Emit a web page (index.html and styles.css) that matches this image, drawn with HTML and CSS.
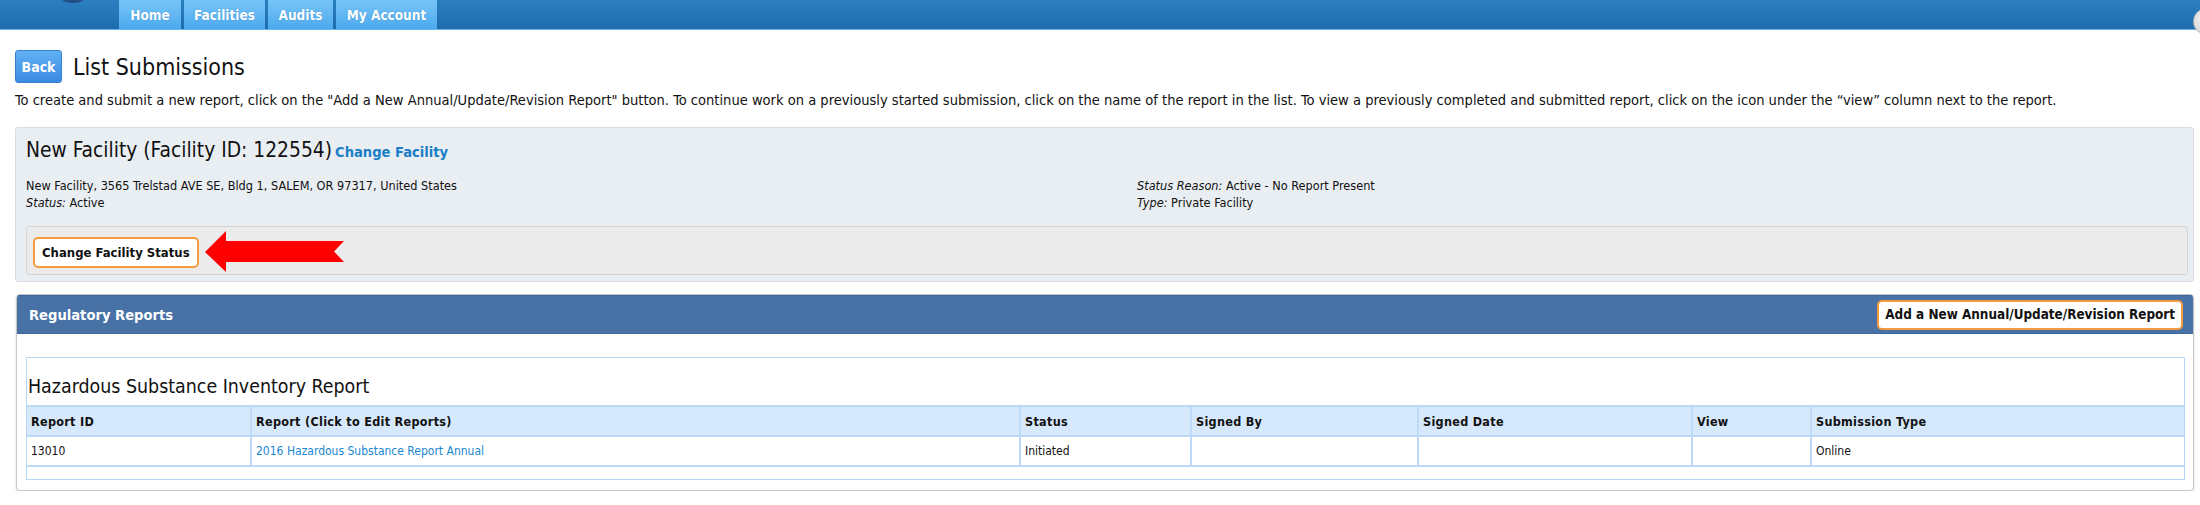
FILE: index.html
```html
<!DOCTYPE html>
<html lang="en">
<head>
  <meta charset="UTF-8">
  <title>List Submissions</title>
  <link rel="stylesheet" href="styles.css">
</head>
<body>
  <header class="topbar">
    <span class="logo"></span>
    <nav class="tabs">
      <a class="tab tab-home" href="#">Home</a>
      <a class="tab tab-facilities" href="#">Facilities</a>
      <a class="tab tab-audits" href="#">Audits</a>
      <a class="tab tab-account" href="#">My Account</a>
    </nav>
    <span class="user-badge"></span>
  </header>

  <main class="page">
    <div class="title-row">
      <button class="back-btn">Back</button>
      <h1>List Submissions</h1>
    </div>
    <p class="intro">To create and submit a new report, click on the "Add a New Annual/Update/Revision Report" button. To continue work on a previously started submission, click on the name of the report in the list. To view a previously completed and submitted report, click on the icon under the “view” column next to the report.</p>

    <section class="facility">
      <h2>New Facility (Facility ID: 122554)<a href="#" class="change-link">Change Facility</a></h2>
      <div class="facility-info">
        <div>
          <div>New Facility, 3565 Trelstad AVE SE, Bldg 1, SALEM, OR 97317, United States</div>
          <div><em>Status:</em> Active</div>
        </div>
        <div>
          <div><em>Status Reason:</em> Active - No Report Present</div>
          <div><em>Type:</em> Private Facility</div>
        </div>
      </div>
      <div class="action-bar">
        <button class="orange-btn">Change Facility Status</button>
        <svg class="arrow" width="140" height="42" viewBox="0 0 140 42">
          <polygon points="0,21 21,0 21,10 139,10 129,20.5 139,31 21,31 21,41" fill="#ff0000"/>
        </svg>
      </div>
    </section>

    <section class="reports">
      <div class="reports-head">
        <span>Regulatory Reports</span>
        <button class="orange-btn">Add a New Annual/Update/Revision Report</button>
      </div>
      <div class="reports-body">
        <div class="report-group">
          <h3>Hazardous Substance Inventory Report</h3>
          <table class="report-table">
            <colgroup>
              <col class="c-id"><col class="c-report"><col class="c-status"><col class="c-signed"><col class="c-date"><col class="c-view"><col>
            </colgroup>
            <thead>
              <tr>
                <th>Report ID</th>
                <th>Report (Click to Edit Reports)</th>
                <th>Status</th>
                <th>Signed By</th>
                <th>Signed Date</th>
                <th>View</th>
                <th>Submission Type</th>
              </tr>
            </thead>
            <tbody>
              <tr>
                <td>13010</td>
                <td><a href="#">2016 Hazardous Substance Report Annual</a></td>
                <td>Initiated</td>
                <td></td>
                <td></td>
                <td></td>
                <td>Online</td>
              </tr>
            </tbody>
          </table>
          <div class="group-foot"></div>
        </div>
      </div>
    </section>
  </main>
</body>
</html>
```

FILE: styles.css
```css
/* Base */
* {
  box-sizing: border-box;
}
body {
  margin: 0;
  font-family: "DejaVu Sans Condensed", "DejaVu Sans", sans-serif;
  color: #111;
  background: #fff;
}

/* Top navigation */
.topbar {
  position: relative;
  height: 30px;
  background: linear-gradient(#2b7fc1, #1e6cab);
  border-bottom: 1px solid #6cb2e8;
  padding-left: 119px;
}
.logo {
  position: absolute;
  left: 62px;
  top: -6px;
  width: 22px;
  height: 9px;
  border-radius: 50%;
  background: #234e86;
}
.tabs {
  display: flex;
  gap: 3px;
  height: 29px;
}
.tab {
  display: flex;
  align-items: center;
  justify-content: center;
  height: 32px;
  margin-top: -3px;
  padding-top: 4px;
  border-radius: 5px 5px 0 0;
  background: linear-gradient(#7cc8f8, #4ba9ee);
  color: #fff;
  font-weight: bold;
  font-size: 13.5px;
  text-decoration: none;
  text-shadow: 0 0 1px rgba(0,60,120,0.4);
}
.tab-home { width: 62px; }
.tab-facilities { width: 81px; }
.tab-audits { width: 65px; }
.tab-account { width: 101px; }
.user-badge {
  position: absolute;
  right: -20px;
  top: 8px;
  width: 27px;
  height: 27px;
  border-radius: 50%;
  background: radial-gradient(circle at 40% 40%, #f2f2f2, #c9c9c9);
  border: 1px solid #bdbdbd;
}

/* Page */
.page {
  padding: 0 6px 0 15px;
}
.title-row {
  display: flex;
  align-items: center;
  gap: 11px;
  margin-top: 20px;
}
.back-btn {
  width: 47px;
  height: 33px;
  border: 1px solid #3a80d2;
  border-radius: 3px;
  background: linear-gradient(#62b0f4, #3a8ae2);
  color: #fff;
  font-family: inherit;
  font-weight: bold;
  font-size: 14px;
  padding: 0;
}
.title-row h1 {
  margin: 0;
  font-weight: normal;
  font-size: 23px;
}
.intro {
  margin: 8px 0 0;
  font-size: 14.55px;
  line-height: 17px;
}

/* Facility panel */
.facility {
  margin-top: 19px;
  padding: 10px 5px 6px 10px;
  background: #e9eef3;
  border: 1px solid #d8dde3;
  border-radius: 3px;
}
.facility h2 {
  margin: 0;
  font-weight: normal;
  font-size: 20.8px;
  line-height: 24px;
}
.change-link {
  margin-left: 3px;
  color: #1a7fc6;
  font-weight: bold;
  font-size: 14.6px;
  text-decoration: none;
}
.facility-info {
  display: grid;
  grid-template-columns: 1111px 1fr;
  margin-top: 13px;
  font-size: 12.6px;
  line-height: 17px;
}
.action-bar {
  display: flex;
  align-items: center;
  height: 49px;
  margin-top: 15px;
  padding: 3px 0 0 6px;
  background: #ebebeb;
  border: 1px solid #d3d3d3;
  border-radius: 3px;
}
.orange-btn {
  height: 31px;
  padding: 0 7px;
  background: #fff;
  border: 2px solid #f59b3f;
  border-radius: 5px;
  color: #111;
  font-family: inherit;
  font-weight: bold;
  font-size: 13px;
}
.arrow {
  margin-left: 6px;
}

/* Regulatory reports */
.reports {
  margin-top: 12px;
  margin-left: 1px;
  border: 1px solid #c6c6c6;
  border-radius: 4px;
  box-shadow: 0 1px 2px rgba(0,0,0,0.2);
  overflow: hidden;
}
.reports-head {
  display: flex;
  align-items: center;
  justify-content: space-between;
  height: 39px;
  padding: 0 10px 0 12px;
  background: #4872a6;
  border-top: 1px solid #3a63a0;
  border-bottom: 1px solid #3d669c;
  color: #fff;
  font-weight: bold;
  font-size: 14.6px;
}
.reports-head .orange-btn {
  height: 30px;
  padding: 0 6px;
  font-size: 13.4px;
}
.reports-body {
  padding: 23px 8px 10px 9px;
}
.report-group {
  border: 1px solid #b7d7f6;
}
.report-group h3 {
  margin: 17px 0 6px 1px;
  font-weight: normal;
  font-size: 19.4px;
  line-height: 24px;
}
.report-table {
  width: 100%;
  border-collapse: collapse;
  table-layout: fixed;
}
.c-id { width: 224px; }
.c-report { width: 769px; }
.c-status { width: 171px; }
.c-signed { width: 227px; }
.c-date { width: 274px; }
.c-view { width: 119px; }
.report-table th,
.report-table td {
  border: 2px solid #bcdaf7;
  padding: 0 4px;
  text-align: left;
  font-size: 12px;
}
.report-table tr > :first-child {
  border-left: none;
}
.report-table tr > :last-child {
  border-right: none;
}
.report-table th {
  height: 30px;
  background: #d6e8fb;
  font-size: 12.5px;
  letter-spacing: 0.3px;
}
.report-table td {
  height: 30px;
}
.report-table a {
  color: #1a86d0;
  text-decoration: none;
}
.group-foot {
  height: 12px;
}
```
